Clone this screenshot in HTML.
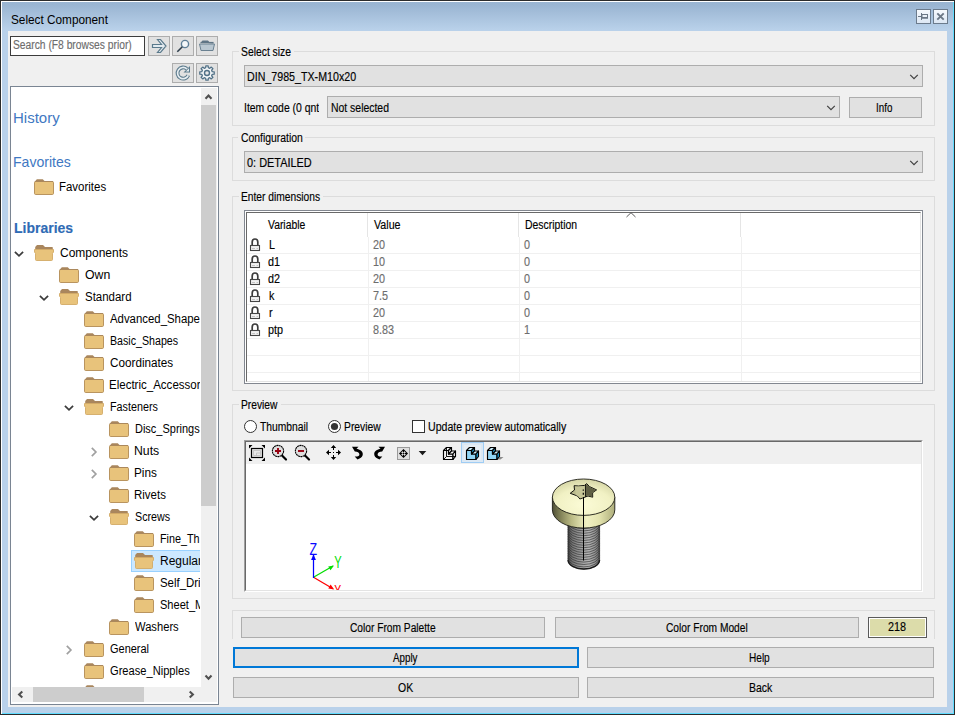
<!DOCTYPE html>
<html lang="en"><head><meta charset="utf-8"><title>Select Component</title>
<style>
*{box-sizing:border-box;margin:0;padding:0}
html,body{width:955px;height:715px;overflow:hidden;background:#b9d1ea}
body{position:relative;font-family:"Liberation Sans",sans-serif;font-size:12px;color:#000}
.a{position:absolute}
.x{position:absolute;line-height:20px;white-space:nowrap;transform-origin:0 0;-webkit-text-stroke:0.15px currentColor}
.grp{position:absolute;border:1px solid #dcdcdc}
.cb{position:absolute;background:#e1e1e1;border:1px solid #adadad}
.sb{position:absolute;background:#e1e1e1;border:1px solid #adadad}
svg{position:absolute;overflow:visible}
</style></head>
<body>
<div class="a" style="left:0px;top:0px;width:955px;height:31px;background:linear-gradient(#99b4d1 0,#9ab5d2 5px,#b9d1ea 30px)"></div>
<div class="a" style="left:0px;top:0px;width:955px;height:715px;border:1px solid #2b2b2b"></div>
<div class="a" style="left:1px;top:1px;width:953px;height:1px;background:#fff"></div>
<div class="a" style="left:1px;top:1px;width:1px;height:713px;background:#fff"></div>
<div class="a" style="left:953px;top:2px;width:1px;height:712px;background:#5fdcff"></div>
<div class="a" style="left:2px;top:713px;width:952px;height:1px;background:#5fdcff"></div>
<div class="a" style="left:8px;top:31px;width:939px;height:676px;background:#f0f0f0"></div>
<div class="x" id="title" style="left:11px;top:10px;-webkit-text-stroke:0;transform:scaleX(0.982);">Select Component</div>
<div class="a" style="left:916px;top:9px;width:15px;height:15px;border:1px solid #6c7b8c;background:linear-gradient(#f6f9fd,#dce7f4)"></div>
<div class="a" style="left:933px;top:9px;width:15px;height:15px;border:1px solid #6c7b8c;background:linear-gradient(#f6f9fd,#dce7f4)"></div>
<svg style="left:916px;top:9px" width="15" height="15" viewBox="0 0 15 15"><path d="M2 7.500h3.500M5.500 4v7" fill="none" stroke="#6b7785" stroke-width="1"/><rect x="6" y="5.500" width="5.500" height="3.500" fill="none" stroke="#6b7785"/><rect x="5.500" y="8" width="6.500" height="1.500" fill="#6b7785"/></svg>
<svg style="left:933px;top:9px" width="15" height="15" viewBox="0 0 15 15"><path d="M4.300 4.300l6.400 6.400M10.700 4.300l-6.400 6.400" fill="none" stroke="#6b7785" stroke-width="1.900"/></svg>
<div class="a" style="left:10px;top:36px;width:135px;height:20px;background:#fff;border:1px solid #3c3c3c"></div>
<div class="x" id="search" style="left:13px;top:35px;color:#6d6d6d;transform:scaleX(0.856);">Search (F8 browses prior)</div>
<div class="sb" style="left:148px;top:36px;width:22px;height:20px"></div>
<div class="sb" style="left:172px;top:36px;width:22px;height:20px"></div>
<div class="sb" style="left:196px;top:36px;width:22px;height:20px"></div>
<div class="sb" style="left:172px;top:63px;width:22px;height:20px"></div>
<div class="sb" style="left:196px;top:63px;width:22px;height:20px"></div>
<svg style="left:148px;top:36px" width="22" height="20" viewBox="0 0 22 20"><path d="M9.500 3.500h3l5.500 6.500-5.500 6.500h-3l4-5h-9v-3h9z" fill="#e3ebf0" stroke="#5b7a8c" stroke-width="1.200" stroke-linejoin="miter"/></svg>
<svg style="left:172px;top:36px" width="22" height="20" viewBox="0 0 22 20"><circle cx="13" cy="8" r="3.600" fill="#f4f7f9" stroke="#5f7f97" stroke-width="1.400"/><path d="M10.300 10.700L5.300 15.700" stroke="#2f3f4c" stroke-width="1.600" fill="none"/></svg>
<svg style="left:196px;top:36px" width="22" height="20" viewBox="0 0 22 20"><path d="M4.800 6.500l1.700-2h5.500l1.300 1.500h3.700l0.500 1.500z" fill="#5f7585"/><path d="M4.500 6.500h13" stroke="#5f7585" stroke-width="1.200"/><path d="M3.500 8h15l-1.500 6.500h-12z" fill="#b9c7d1" stroke="#6a8191" stroke-width="1" stroke-linejoin="round"/></svg>
<svg style="left:172px;top:63px" width="22" height="20" viewBox="0 0 22 20"><path d="M14.800 5.800A5.600 5.600 0 1 0 16.300 12.300" fill="none" stroke="#5b7a8c" stroke-width="3.800"/><path d="M11.500 9.500h6.500V3z" fill="#5b7a8c"/><path d="M14.800 5.800A5.600 5.600 0 1 0 16.300 12.300" fill="none" stroke="#e6edf1" stroke-width="1.700"/><path d="M13.800 8.500h3.200V5.300z" fill="#e6edf1"/></svg>
<svg style="left:196px;top:63px" width="22" height="20" viewBox="0 0 22 20"><path d="M9.86 2.79 L12.14 2.79 L12.34 4.77 L13.75 5.35 L15.29 4.09 L16.91 5.71 L15.65 7.25 L16.23 8.66 L18.21 8.86 L18.21 11.14 L16.23 11.34 L15.65 12.75 L16.91 14.29 L15.29 15.91 L13.75 14.65 L12.34 15.23 L12.14 17.21 L9.86 17.21 L9.66 15.23 L8.25 14.65 L6.71 15.91 L5.09 14.29 L6.35 12.75 L5.77 11.34 L3.79 11.14 L3.79 8.86 L5.77 8.66 L6.35 7.25 L5.09 5.71 L6.71 4.09 L8.25 5.35 L9.66 4.77Z" fill="#f3f6f8" stroke="#517187" stroke-width="1.300" stroke-linejoin="round"/><circle cx="11" cy="10" r="2.500" fill="#e8e8e8" stroke="#517187" stroke-width="1.400"/></svg>
<div class="a" style="left:10px;top:86px;width:209px;height:619px;background:#fff;border:1px solid #7a8593"></div>
<div class="a" style="left:12px;top:88px;width:188px;height:599px;overflow:hidden">
<div class="x" id="h1" style="left:1px;top:20px;font-size:15px;color:#3f78c2;-webkit-text-stroke:0;">History</div>
<div class="x" id="h2" style="left:1px;top:64px;font-size:15px;color:#3f78c2;-webkit-text-stroke:0;transform:scaleX(0.938);">Favorites</div>
<div class="x" id="h3" style="left:2px;top:130px;font-size:15px;color:#2f6bb5;font-weight:bold;transform:scaleX(0.933);">Libraries</div>
<svg style="left:22px;top:91px" width="20" height="16" viewBox="0 0 20 16"><path d="M0.500 3L2.800 0.200h6L11 2.500z" fill="#a9865d"/><rect x="0.500" y="2.500" width="19" height="13" rx="1.200" fill="#e8c37b" stroke="#b9945f" stroke-width="1"/><path d="M1 2.500h18" stroke="#ab885c" stroke-width="1"/></svg>
<div class="x" id="ti0" style="left:47px;top:89px;-webkit-text-stroke:0;transform:scaleX(0.955);">Favorites</div>
<svg style="left:2px;top:163px" width="10" height="6" viewBox="0 0 10 6"><path d="M0.900 0.800L5 4.900l4.100-4.100" fill="none" stroke="#3c3c3c" stroke-width="1.700"/></svg>
<svg style="left:22px;top:157px" width="20" height="16" viewBox="0 0 20 16"><path d="M1.200 5V2L3 0h6l2 2h7.300l0.500 0.600V5z" fill="#a9865d"/><path d="M0.500 4.500h19v2.500l-1 1.500v6q0 1-1 1h-15q-1 0-1-1v-6l-1-1.500z" fill="#e8c37b" stroke="#d3aa66" stroke-width="0.900"/></svg>
<div class="x" id="ti1" style="left:48px;top:155px;-webkit-text-stroke:0;">Components</div>
<svg style="left:47px;top:179px" width="20" height="16" viewBox="0 0 20 16"><path d="M0.500 3L2.800 0.200h6L11 2.500z" fill="#a9865d"/><rect x="0.500" y="2.500" width="19" height="13" rx="1.200" fill="#e8c37b" stroke="#b9945f" stroke-width="1"/><path d="M1 2.500h18" stroke="#ab885c" stroke-width="1"/></svg>
<div class="x" id="ti2" style="left:73px;top:177px;-webkit-text-stroke:0;transform:scaleX(1.022);">Own</div>
<svg style="left:27px;top:207px" width="10" height="6" viewBox="0 0 10 6"><path d="M0.900 0.800L5 4.900l4.100-4.100" fill="none" stroke="#3c3c3c" stroke-width="1.700"/></svg>
<svg style="left:47px;top:201px" width="20" height="16" viewBox="0 0 20 16"><path d="M1.200 5V2L3 0h6l2 2h7.300l0.500 0.600V5z" fill="#a9865d"/><path d="M0.500 4.500h19v2.500l-1 1.500v6q0 1-1 1h-15q-1 0-1-1v-6l-1-1.500z" fill="#e8c37b" stroke="#d3aa66" stroke-width="0.900"/></svg>
<div class="x" id="ti3" style="left:73px;top:199px;-webkit-text-stroke:0;transform:scaleX(0.955);">Standard</div>
<svg style="left:72px;top:223px" width="20" height="16" viewBox="0 0 20 16"><path d="M0.500 3L2.800 0.200h6L11 2.500z" fill="#a9865d"/><rect x="0.500" y="2.500" width="19" height="13" rx="1.200" fill="#e8c37b" stroke="#b9945f" stroke-width="1"/><path d="M1 2.500h18" stroke="#ab885c" stroke-width="1"/></svg>
<div class="x" id="ti4" style="left:98px;top:221px;-webkit-text-stroke:0;transform:scaleX(0.949);">Advanced_Shape</div>
<svg style="left:72px;top:245px" width="20" height="16" viewBox="0 0 20 16"><path d="M0.500 3L2.800 0.200h6L11 2.500z" fill="#a9865d"/><rect x="0.500" y="2.500" width="19" height="13" rx="1.200" fill="#e8c37b" stroke="#b9945f" stroke-width="1"/><path d="M1 2.500h18" stroke="#ab885c" stroke-width="1"/></svg>
<div class="x" id="ti5" style="left:98px;top:243px;-webkit-text-stroke:0;transform:scaleX(0.888);">Basic_Shapes</div>
<svg style="left:72px;top:267px" width="20" height="16" viewBox="0 0 20 16"><path d="M0.500 3L2.800 0.200h6L11 2.500z" fill="#a9865d"/><rect x="0.500" y="2.500" width="19" height="13" rx="1.200" fill="#e8c37b" stroke="#b9945f" stroke-width="1"/><path d="M1 2.500h18" stroke="#ab885c" stroke-width="1"/></svg>
<div class="x" id="ti6" style="left:98px;top:265px;-webkit-text-stroke:0;transform:scaleX(0.977);">Coordinates</div>
<svg style="left:72px;top:289px" width="20" height="16" viewBox="0 0 20 16"><path d="M0.500 3L2.800 0.200h6L11 2.500z" fill="#a9865d"/><rect x="0.500" y="2.500" width="19" height="13" rx="1.200" fill="#e8c37b" stroke="#b9945f" stroke-width="1"/><path d="M1 2.500h18" stroke="#ab885c" stroke-width="1"/></svg>
<div class="x" id="ti7" style="left:97px;top:287px;-webkit-text-stroke:0;transform:scaleX(0.96);">Electric_Accessor</div>
<svg style="left:52px;top:317px" width="10" height="6" viewBox="0 0 10 6"><path d="M0.900 0.800L5 4.900l4.100-4.100" fill="none" stroke="#3c3c3c" stroke-width="1.700"/></svg>
<svg style="left:72px;top:311px" width="20" height="16" viewBox="0 0 20 16"><path d="M1.200 5V2L3 0h6l2 2h7.300l0.500 0.600V5z" fill="#a9865d"/><path d="M0.500 4.500h19v2.500l-1 1.500v6q0 1-1 1h-15q-1 0-1-1v-6l-1-1.500z" fill="#e8c37b" stroke="#d3aa66" stroke-width="0.900"/></svg>
<div class="x" id="ti8" style="left:98px;top:309px;-webkit-text-stroke:0;transform:scaleX(0.897);">Fasteners</div>
<svg style="left:97px;top:333px" width="20" height="16" viewBox="0 0 20 16"><path d="M0.500 3L2.800 0.200h6L11 2.500z" fill="#a9865d"/><rect x="0.500" y="2.500" width="19" height="13" rx="1.200" fill="#e8c37b" stroke="#b9945f" stroke-width="1"/><path d="M1 2.500h18" stroke="#ab885c" stroke-width="1"/></svg>
<div class="x" id="ti9" style="left:123px;top:331px;-webkit-text-stroke:0;transform:scaleX(0.915);">Disc_Springs</div>
<svg style="left:79px;top:359px" width="6" height="10" viewBox="0 0 6 10"><path d="M0.800 0.900L4.900 5l-4.100 4.100" fill="none" stroke="#a0a0a0" stroke-width="1.700"/></svg>
<svg style="left:97px;top:355px" width="20" height="16" viewBox="0 0 20 16"><path d="M0.500 3L2.800 0.200h6L11 2.500z" fill="#a9865d"/><rect x="0.500" y="2.500" width="19" height="13" rx="1.200" fill="#e8c37b" stroke="#b9945f" stroke-width="1"/><path d="M1 2.500h18" stroke="#ab885c" stroke-width="1"/></svg>
<div class="x" id="ti10" style="left:122px;top:353px;-webkit-text-stroke:0;transform:scaleX(1.021);">Nuts</div>
<svg style="left:79px;top:381px" width="6" height="10" viewBox="0 0 6 10"><path d="M0.800 0.900L4.900 5l-4.100 4.100" fill="none" stroke="#a0a0a0" stroke-width="1.700"/></svg>
<svg style="left:97px;top:377px" width="20" height="16" viewBox="0 0 20 16"><path d="M0.500 3L2.800 0.200h6L11 2.500z" fill="#a9865d"/><rect x="0.500" y="2.500" width="19" height="13" rx="1.200" fill="#e8c37b" stroke="#b9945f" stroke-width="1"/><path d="M1 2.500h18" stroke="#ab885c" stroke-width="1"/></svg>
<div class="x" id="ti11" style="left:122px;top:375px;-webkit-text-stroke:0;transform:scaleX(0.982);">Pins</div>
<svg style="left:97px;top:399px" width="20" height="16" viewBox="0 0 20 16"><path d="M0.500 3L2.800 0.200h6L11 2.500z" fill="#a9865d"/><rect x="0.500" y="2.500" width="19" height="13" rx="1.200" fill="#e8c37b" stroke="#b9945f" stroke-width="1"/><path d="M1 2.500h18" stroke="#ab885c" stroke-width="1"/></svg>
<div class="x" id="ti12" style="left:122px;top:397px;-webkit-text-stroke:0;transform:scaleX(0.956);">Rivets</div>
<svg style="left:77px;top:427px" width="10" height="6" viewBox="0 0 10 6"><path d="M0.900 0.800L5 4.900l4.100-4.100" fill="none" stroke="#3c3c3c" stroke-width="1.700"/></svg>
<svg style="left:97px;top:421px" width="20" height="16" viewBox="0 0 20 16"><path d="M1.200 5V2L3 0h6l2 2h7.300l0.500 0.600V5z" fill="#a9865d"/><path d="M0.500 4.500h19v2.500l-1 1.500v6q0 1-1 1h-15q-1 0-1-1v-6l-1-1.500z" fill="#e8c37b" stroke="#d3aa66" stroke-width="0.900"/></svg>
<div class="x" id="ti13" style="left:123px;top:419px;-webkit-text-stroke:0;transform:scaleX(0.893);">Screws</div>
<svg style="left:122px;top:443px" width="20" height="16" viewBox="0 0 20 16"><path d="M0.500 3L2.800 0.200h6L11 2.500z" fill="#a9865d"/><rect x="0.500" y="2.500" width="19" height="13" rx="1.200" fill="#e8c37b" stroke="#b9945f" stroke-width="1"/><path d="M1 2.500h18" stroke="#ab885c" stroke-width="1"/></svg>
<div class="x" id="ti14" style="left:148px;top:441px;-webkit-text-stroke:0;transform:scaleX(0.9);">Fine_Th</div>
<div class="a" style="left:119px;top:462px;width:200px;height:22px;background:#cce8ff;border:1px solid #99d1ff"></div>
<svg style="left:122px;top:465px" width="20" height="16" viewBox="0 0 20 16"><path d="M1.200 5V2L3 0h6l2 2h7.300l0.500 0.600V5z" fill="#a9865d"/><path d="M0.500 4.500h19v2.500l-1 1.500v6q0 1-1 1h-15q-1 0-1-1v-6l-1-1.500z" fill="#e8c37b" stroke="#d3aa66" stroke-width="0.900"/></svg>
<div class="x" id="ti15" style="left:148px;top:463px;-webkit-text-stroke:0;">Regular</div>
<svg style="left:122px;top:487px" width="20" height="16" viewBox="0 0 20 16"><path d="M0.500 3L2.800 0.200h6L11 2.500z" fill="#a9865d"/><rect x="0.500" y="2.500" width="19" height="13" rx="1.200" fill="#e8c37b" stroke="#b9945f" stroke-width="1"/><path d="M1 2.500h18" stroke="#ab885c" stroke-width="1"/></svg>
<div class="x" id="ti16" style="left:148px;top:485px;-webkit-text-stroke:0;transform:scaleX(0.952);">Self_Dri</div>
<svg style="left:122px;top:509px" width="20" height="16" viewBox="0 0 20 16"><path d="M0.500 3L2.800 0.200h6L11 2.500z" fill="#a9865d"/><rect x="0.500" y="2.500" width="19" height="13" rx="1.200" fill="#e8c37b" stroke="#b9945f" stroke-width="1"/><path d="M1 2.500h18" stroke="#ab885c" stroke-width="1"/></svg>
<div class="x" id="ti17" style="left:148px;top:507px;-webkit-text-stroke:0;transform:scaleX(0.921);">Sheet_M</div>
<svg style="left:97px;top:531px" width="20" height="16" viewBox="0 0 20 16"><path d="M0.500 3L2.800 0.200h6L11 2.500z" fill="#a9865d"/><rect x="0.500" y="2.500" width="19" height="13" rx="1.200" fill="#e8c37b" stroke="#b9945f" stroke-width="1"/><path d="M1 2.500h18" stroke="#ab885c" stroke-width="1"/></svg>
<div class="x" id="ti18" style="left:123px;top:529px;-webkit-text-stroke:0;transform:scaleX(0.932);">Washers</div>
<svg style="left:54px;top:557px" width="6" height="10" viewBox="0 0 6 10"><path d="M0.800 0.900L4.900 5l-4.100 4.100" fill="none" stroke="#a0a0a0" stroke-width="1.700"/></svg>
<svg style="left:72px;top:553px" width="20" height="16" viewBox="0 0 20 16"><path d="M0.500 3L2.800 0.200h6L11 2.500z" fill="#a9865d"/><rect x="0.500" y="2.500" width="19" height="13" rx="1.200" fill="#e8c37b" stroke="#b9945f" stroke-width="1"/><path d="M1 2.500h18" stroke="#ab885c" stroke-width="1"/></svg>
<div class="x" id="ti19" style="left:98px;top:551px;-webkit-text-stroke:0;transform:scaleX(0.914);">General</div>
<svg style="left:72px;top:575px" width="20" height="16" viewBox="0 0 20 16"><path d="M0.500 3L2.800 0.200h6L11 2.500z" fill="#a9865d"/><rect x="0.500" y="2.500" width="19" height="13" rx="1.200" fill="#e8c37b" stroke="#b9945f" stroke-width="1"/><path d="M1 2.500h18" stroke="#ab885c" stroke-width="1"/></svg>
<div class="x" id="ti20" style="left:98px;top:573px;-webkit-text-stroke:0;transform:scaleX(0.927);">Grease_Nipples</div>
<svg style="left:72px;top:597px" width="20" height="16" viewBox="0 0 20 16"><path d="M0.500 3L2.800 0.200h6L11 2.500z" fill="#a9865d"/><rect x="0.500" y="2.500" width="19" height="13" rx="1.200" fill="#e8c37b" stroke="#b9945f" stroke-width="1"/><path d="M1 2.500h18" stroke="#ab885c" stroke-width="1"/></svg>
</div>
<div class="a" style="left:201px;top:88px;width:16px;height:599px;background:#f0f0f0"></div>
<div class="a" style="left:201px;top:105px;width:15px;height:401px;background:#cdcdcd"></div>
<svg style="left:204px;top:93px" width="9" height="7" viewBox="0 0 9 7"><path d="M1.500 5.700L4.500 2.500 7.500 5.700" fill="none" stroke="#505050" stroke-width="2.100"/></svg>
<svg style="left:204px;top:674px" width="9" height="7" viewBox="0 0 9 7"><path d="M1.500 1.500L4.500 4.700 7.500 1.500" fill="none" stroke="#505050" stroke-width="2.100"/></svg>
<div class="a" style="left:12px;top:687px;width:205px;height:15px;background:#f0f0f0"></div>
<div class="a" style="left:33px;top:687px;width:111px;height:15px;background:#cdcdcd"></div>
<svg style="left:17px;top:690px" width="7" height="9" viewBox="0 0 7 9"><path d="M5.300 1.500L2.100 4.500 5.300 7.500" fill="none" stroke="#505050" stroke-width="2.100"/></svg>
<svg style="left:188px;top:690px" width="7" height="9" viewBox="0 0 7 9"><path d="M1.700 1.500L4.900 4.500 1.700 7.500" fill="none" stroke="#505050" stroke-width="2.100"/></svg>
<div class="grp" style="left:232px;top:51px;width:703px;height:75px"></div>
<div class="a" style="left:239px;top:51px;width:55px;height:1px;background:#f0f0f0"></div>
<div class="x" id="g1" style="left:241px;top:42px;transform:scaleX(0.862);">Select size</div>
<div class="cb" style="left:244px;top:65px;width:679px;height:22px"></div>
<div class="x" id="c1" style="left:247px;top:67px;transform:scaleX(0.889);">DIN_7985_TX-M10x20</div>
<svg style="left:909px;top:74px" width="10" height="6" viewBox="0 0 10 6"><path d="M1.200 0.800L5 4.600l3.800-3.800" fill="none" stroke="#404040" stroke-width="1.200"/></svg>
<div class="a" style="left:240px;top:96px;width:79px;height:22px;overflow:hidden">
<div class="x" id="itemcode" style="left:4px;top:2px;transform:scaleX(0.867);">Item code (0 qnt</div>
</div>
<div class="cb" style="left:327px;top:96px;width:513px;height:22px"></div>
<div class="x" id="c2" style="left:331px;top:98px;transform:scaleX(0.869);">Not selected</div>
<svg style="left:826px;top:105px" width="10" height="6" viewBox="0 0 10 6"><path d="M1.200 0.800L5 4.600l3.800-3.800" fill="none" stroke="#404040" stroke-width="1.200"/></svg>
<div class="cb" style="left:849px;top:97px;width:73px;height:21px;"></div>
<div class="x" id="binfo" style="left:876px;top:98px;transform:scaleX(0.816);">Info</div>
<div class="grp" style="left:232px;top:137px;width:703px;height:44px"></div>
<div class="a" style="left:238px;top:137px;width:67px;height:1px;background:#f0f0f0"></div>
<div class="x" id="g2" style="left:241px;top:128px;transform:scaleX(0.866);">Configuration</div>
<div class="cb" style="left:244px;top:151px;width:679px;height:22px"></div>
<div class="x" id="c3" style="left:247px;top:153px;transform:scaleX(0.91);">0: DETAILED</div>
<svg style="left:909px;top:160px" width="10" height="6" viewBox="0 0 10 6"><path d="M1.200 0.800L5 4.600l3.800-3.800" fill="none" stroke="#404040" stroke-width="1.200"/></svg>
<div class="grp" style="left:232px;top:196px;width:703px;height:195px"></div>
<div class="a" style="left:239px;top:196px;width:84px;height:1px;background:#f0f0f0"></div>
<div class="x" id="g3" style="left:241px;top:187px;transform:scaleX(0.853);">Enter dimensions</div>
<div class="a" style="left:244px;top:210px;width:679px;height:174px;background:#fff;border:1px solid #828790"></div>
<div class="a" style="left:246px;top:212px;width:675px;height:170px;border:1px solid #696969;border-right-color:#e3e3e3;border-bottom-color:#e3e3e3"></div>
<div class="a" style="left:247px;top:253px;width:673px;height:1px;background:#f0f0f0"></div>
<div class="a" style="left:247px;top:270px;width:673px;height:1px;background:#f0f0f0"></div>
<div class="a" style="left:247px;top:287px;width:673px;height:1px;background:#f0f0f0"></div>
<div class="a" style="left:247px;top:304px;width:673px;height:1px;background:#f0f0f0"></div>
<div class="a" style="left:247px;top:321px;width:673px;height:1px;background:#f0f0f0"></div>
<div class="a" style="left:247px;top:338px;width:673px;height:1px;background:#f0f0f0"></div>
<div class="a" style="left:247px;top:355px;width:673px;height:1px;background:#f0f0f0"></div>
<div class="a" style="left:247px;top:372px;width:673px;height:1px;background:#f0f0f0"></div>
<div class="a" style="left:367px;top:213px;width:1px;height:24px;background:#e5e5e5"></div>
<div class="a" style="left:368px;top:237px;width:1px;height:144px;background:#f0f0f0"></div>
<div class="a" style="left:518px;top:213px;width:1px;height:24px;background:#e5e5e5"></div>
<div class="a" style="left:519px;top:237px;width:1px;height:144px;background:#f0f0f0"></div>
<div class="a" style="left:740px;top:213px;width:1px;height:24px;background:#e5e5e5"></div>
<div class="a" style="left:741px;top:237px;width:1px;height:144px;background:#f0f0f0"></div>
<div class="x" id="th1" style="left:268px;top:215px;transform:scaleX(0.863);">Variable</div>
<div class="x" id="th2" style="left:374px;top:215px;transform:scaleX(0.89);">Value</div>
<div class="x" id="th3" style="left:525px;top:215px;transform:scaleX(0.867);">Description</div>
<svg style="left:626px;top:212px" width="10" height="6" viewBox="0 0 10 6"><path d="M0.500 5L5 0.700 9.500 5" fill="none" stroke="#5a5a5a" stroke-width="1"/></svg>
<svg style="left:250px;top:238px" width="11" height="13" viewBox="0 0 11 13"><path d="M2.200 7.500V4a2.800 3 0 0 1 5.600 0V7.500" fill="none" stroke="#3c3c3c" stroke-width="1.700"/><rect x="0.500" y="7.500" width="9" height="5" fill="#f2f2f2" stroke="#454545" stroke-width="1.100"/><path d="M2 10.500h3M6.500 10.500h1.500" stroke="#c4c4c4" stroke-width="1"/></svg>
<div class="x" id="r0a" style="left:269px;top:235px;transform:scaleX(0.9);">L</div>
<div class="x" id="r0b" style="left:373px;top:235px;color:#6d6d6d;transform:scaleX(0.9);">20</div>
<div class="x" id="r0c" style="left:524px;top:235px;color:#6d6d6d;transform:scaleX(0.9);">0</div>
<svg style="left:250px;top:255px" width="11" height="13" viewBox="0 0 11 13"><path d="M2.200 7.500V4a2.800 3 0 0 1 5.600 0V7.500" fill="none" stroke="#3c3c3c" stroke-width="1.700"/><rect x="0.500" y="7.500" width="9" height="5" fill="#f2f2f2" stroke="#454545" stroke-width="1.100"/><path d="M2 10.500h3M6.500 10.500h1.500" stroke="#c4c4c4" stroke-width="1"/></svg>
<div class="x" id="r1a" style="left:268px;top:252px;transform:scaleX(0.9);">d1</div>
<div class="x" id="r1b" style="left:373px;top:252px;color:#6d6d6d;transform:scaleX(0.9);">10</div>
<div class="x" id="r1c" style="left:524px;top:252px;color:#6d6d6d;transform:scaleX(0.9);">0</div>
<svg style="left:250px;top:272px" width="11" height="13" viewBox="0 0 11 13"><path d="M2.200 7.500V4a2.800 3 0 0 1 5.600 0V7.500" fill="none" stroke="#3c3c3c" stroke-width="1.700"/><rect x="0.500" y="7.500" width="9" height="5" fill="#f2f2f2" stroke="#454545" stroke-width="1.100"/><path d="M2 10.500h3M6.500 10.500h1.500" stroke="#c4c4c4" stroke-width="1"/></svg>
<div class="x" id="r2a" style="left:268px;top:269px;transform:scaleX(0.9);">d2</div>
<div class="x" id="r2b" style="left:373px;top:269px;color:#6d6d6d;transform:scaleX(0.9);">20</div>
<div class="x" id="r2c" style="left:524px;top:269px;color:#6d6d6d;transform:scaleX(0.9);">0</div>
<svg style="left:250px;top:289px" width="11" height="13" viewBox="0 0 11 13"><path d="M2.200 7.500V4a2.800 3 0 0 1 5.600 0V7.500" fill="none" stroke="#3c3c3c" stroke-width="1.700"/><rect x="0.500" y="7.500" width="9" height="5" fill="#f2f2f2" stroke="#454545" stroke-width="1.100"/><path d="M2 10.500h3M6.500 10.500h1.500" stroke="#c4c4c4" stroke-width="1"/></svg>
<div class="x" id="r3a" style="left:269px;top:286px;transform:scaleX(0.9);">k</div>
<div class="x" id="r3b" style="left:373px;top:286px;color:#6d6d6d;transform:scaleX(0.9);">7.5</div>
<div class="x" id="r3c" style="left:524px;top:286px;color:#6d6d6d;transform:scaleX(0.9);">0</div>
<svg style="left:250px;top:306px" width="11" height="13" viewBox="0 0 11 13"><path d="M2.200 7.500V4a2.800 3 0 0 1 5.600 0V7.500" fill="none" stroke="#3c3c3c" stroke-width="1.700"/><rect x="0.500" y="7.500" width="9" height="5" fill="#f2f2f2" stroke="#454545" stroke-width="1.100"/><path d="M2 10.500h3M6.500 10.500h1.500" stroke="#c4c4c4" stroke-width="1"/></svg>
<div class="x" id="r4a" style="left:269px;top:303px;transform:scaleX(0.9);">r</div>
<div class="x" id="r4b" style="left:373px;top:303px;color:#6d6d6d;transform:scaleX(0.9);">20</div>
<div class="x" id="r4c" style="left:524px;top:303px;color:#6d6d6d;transform:scaleX(0.9);">0</div>
<svg style="left:250px;top:323px" width="11" height="13" viewBox="0 0 11 13"><path d="M2.200 7.500V4a2.800 3 0 0 1 5.600 0V7.500" fill="none" stroke="#3c3c3c" stroke-width="1.700"/><rect x="0.500" y="7.500" width="9" height="5" fill="#f2f2f2" stroke="#454545" stroke-width="1.100"/><path d="M2 10.500h3M6.500 10.500h1.500" stroke="#c4c4c4" stroke-width="1"/></svg>
<div class="x" id="r5a" style="left:268px;top:320px;transform:scaleX(0.9);">ptp</div>
<div class="x" id="r5b" style="left:373px;top:320px;color:#6d6d6d;transform:scaleX(0.9);">8.83</div>
<div class="x" id="r5c" style="left:524px;top:320px;color:#6d6d6d;transform:scaleX(0.9);">1</div>
<div class="grp" style="left:232px;top:404px;width:703px;height:195px"></div>
<div class="a" style="left:239px;top:404px;width:42px;height:1px;background:#f0f0f0"></div>
<div class="x" id="g4" style="left:241px;top:395px;transform:scaleX(0.853);">Preview</div>
<svg style="left:244px;top:420px" width="13" height="13" viewBox="0 0 13 13"><circle cx="6.500" cy="6.500" r="6" fill="#fff" stroke="#333" stroke-width="1"/></svg>
<div class="x" id="rt1" style="left:260px;top:417px;transform:scaleX(0.859);">Thumbnail</div>
<svg style="left:328px;top:420px" width="13" height="13" viewBox="0 0 13 13"><circle cx="6.500" cy="6.500" r="6" fill="#fff" stroke="#333" stroke-width="1"/><circle cx="6.500" cy="6.500" r="3.600" fill="#333"/></svg>
<div class="x" id="rt2" style="left:344px;top:417px;transform:scaleX(0.86);">Preview</div>
<div class="a" style="left:412px;top:420px;width:13px;height:13px;background:#fff;border:1px solid #333"></div>
<div class="x" id="rt3" style="left:428px;top:417px;transform:scaleX(0.882);">Update preview automatically</div>
<div class="a" style="left:244px;top:440px;width:679px;height:152px;background:#fff;border:1px solid #a0a0a0;border-right-color:#fff;border-bottom-color:#fff"></div>
<div class="a" style="left:245px;top:441px;width:677px;height:150px;border:1px solid #696969;border-right-color:#e3e3e3;border-bottom-color:#e3e3e3"></div>
<div class="a" style="left:246px;top:442px;width:675px;height:22px;background:#f0f0f0"></div>
<div class="a" id="pv" style="left:246px;top:442px;width:675px;height:148px;overflow:hidden">
<svg style="left:0;top:0" width="675" height="148" viewBox="246 442 675 148">
<defs>
<linearGradient id="gs" x1="0" x2="1" y1="0" y2="0"><stop offset="0" stop-color="#4e4e36"/><stop offset="0.100" stop-color="#77774f"/><stop offset="0.300" stop-color="#b9b983"/><stop offset="0.550" stop-color="#f1f1c3"/><stop offset="0.750" stop-color="#e3e3ae"/><stop offset="1" stop-color="#aeae7c"/></linearGradient>
<radialGradient id="gt" cx="0.500" cy="0.700" r="0.800"><stop offset="0" stop-color="#fbfbd6"/><stop offset="0.550" stop-color="#f1f1c4"/><stop offset="1" stop-color="#c9c998"/></radialGradient>
<linearGradient id="gh" x1="0" x2="1" y1="0" y2="0"><stop offset="0" stop-color="#4a4a4a"/><stop offset="0.150" stop-color="#777"/><stop offset="0.450" stop-color="#a2a2a2"/><stop offset="0.650" stop-color="#b4b4b4"/><stop offset="0.850" stop-color="#949494"/><stop offset="1" stop-color="#626262"/></linearGradient>
</defs>
<g transform="translate(249 445)"><path d="M0 0h3.500L0 3.500zM16 0h-3.500L16 3.500zM0 16h3.500L0 12.500zM16 16h-3.500L16 12.500z" fill="#000"/><rect x="2.500" y="3.500" width="11" height="9" fill="#e8e8e8" stroke="#000" stroke-width="1.200"/><path d="M4.500 5.500h7v5h-7zM7.500 10.500v-2.500h4" fill="none" stroke="#bdbdbd" stroke-width="0.800"/></g>
<g transform="translate(278 451)"><path d="M4 4.500L8 8.500" stroke="#000" stroke-width="2.200" stroke-linecap="round" fill="none"/><circle cx="0" cy="0" r="5.600" fill="#dedede" stroke="#000" stroke-width="1.100" stroke-dasharray="2 0.400"/><path d="M-3 0h6M0 -3v6" stroke="#960010" stroke-width="1.900" fill="none"/></g>
<g transform="translate(301 451)"><path d="M4 4.500L8 8.500" stroke="#000" stroke-width="2.200" stroke-linecap="round" fill="none"/><circle cx="0" cy="0" r="5.600" fill="#dedede" stroke="#000" stroke-width="1.100" stroke-dasharray="2 0.400"/><path d="M-3 0h6" stroke="#960010" stroke-width="1.900" fill="none"/></g>
<g transform="translate(333.500 452.500)" fill="#000"><path d="M0 -7.500l2.700 3h-5.400zM0 7.500l2.700-3h-5.400zM-7.500 0l3-2.700v5.400zM7.500 0l-3-2.700v5.400z"/><path d="M0 -5v2.500M0 5v-2.500M-5 0h2.500M5 0h-2.500" stroke="#000" stroke-width="1" fill="none"/><rect x="-0.500" y="-0.500" width="1" height="1"/></g>
<path d="M352 446.800h6.500l-2 2c3.300 0.500 6.300 2.500 6.300 5.300 0 2-1.300 3.500-3.300 4.500l-2 0.900-2.800-3h2.300c1.600-0.300 2.400-1 2.400-2.100 0-1.500-2-2.800-4.600-2.800z" fill="#000"/>
<path d="M385 446.800h-6.500l2 2c-3.300 0.500-6.300 2.500-6.300 5.300 0 2 1.300 3.500 3.300 4.500l2 0.900 2.800-3h-2.300c-1.600-0.300-2.400-1-2.400-2.100 0-1.500 2-2.800 4.600-2.800z" fill="#000"/>
<rect x="397.500" y="447.500" width="12" height="12" fill="#dfdfdf" stroke="#9a9a9a"/>
<g transform="translate(403.500 453.500)"><path d="M0 -4.500L4.500 0 0 4.500 -4.500 0z" fill="#000"/><path d="M-1.500 -1.500h3v3h-3z" fill="#dfdfdf"/><path d="M0 -3v6M-3 0h6" stroke="#000" stroke-width="1" /><path d="M-1 -2.500v5M1 -2.500v5M-2.500 -1h5M-2.500 1h5" stroke="#dfdfdf" stroke-width="0.600"/></g>
<path d="M418.700 451h7.600l-3.800 4.200z" fill="#1a1a1a"/>
<g transform="translate(443 447)" stroke="#000" stroke-width="1.150" stroke-linejoin="round"><path d="M0.500 3.500h5v3.500h4.500v5.500h-9.500z" fill="#f4f4f4"/><path d="M0.500 3.500l3-3h5l-3 3z" fill="#f4f4f4"/><path d="M5.500 3.500l3-3v3.500l-3 3z" fill="#f4f4f4"/><path d="M5.500 7l3-3h4l-2.500 3z" fill="#f4f4f4"/><path d="M10 7l2.500-3v5.500l-2.500 3z" fill="#f4f4f4"/><path d="M3.500 0.500v9l-3 3M3.500 9.500h9" fill="none" stroke-width="0.900"/></g>
<rect x="461.500" y="442.500" width="22" height="20" fill="#dbe8f4" stroke="#9fcdf5"/>
<rect x="464" y="445" width="17" height="15" fill="#e6eef5"/>
<g transform="translate(466 447)" stroke="#000" stroke-width="1.150" stroke-linejoin="round"><path d="M0.500 3.500h5v3.500h4.500v5.500h-9.500z" fill="#90d4f5"/><path d="M0.500 3.500l3-3h5l-3 3z" fill="#c9edfc"/><path d="M5.500 3.500l3-3v3.500l-3 3z" fill="#1b96cc"/><path d="M5.500 7l3-3h4l-2.500 3z" fill="#c9edfc"/><path d="M10 7l2.500-3v5.500l-2.500 3z" fill="#1b96cc"/></g>
<path d="M497 459.500l3-2.500h3.500l-3 2.500z" fill="#8c8c8c"/>
<g transform="translate(487 447)" stroke="#000" stroke-width="1.150" stroke-linejoin="round"><path d="M0.500 3.500h5v3.500h4.500v5.500h-9.500z" fill="#90d4f5"/><path d="M0.500 3.500l3-3h5l-3 3z" fill="#c9edfc"/><path d="M5.500 3.500l3-3v3.500l-3 3z" fill="#1b96cc"/><path d="M5.500 7l3-3h4l-2.500 3z" fill="#c9edfc"/><path d="M10 7l2.500-3v5.500l-2.500 3z" fill="#1b96cc"/></g>
<g fill="none" stroke-width="1.250"><path d="M313.500 577.300L333 588.800" stroke="#f00"/><path d="M313.500 577.300L333 566" stroke="#0d0"/><path d="M313.500 578V555" stroke="#00f"/></g>
<path d="M313.500 554.300l2.400 5.700h-4.800z" fill="#00f"/>
<path d="M334 565.400l-5.800 1.200 2.300 3.700z" fill="#0d0"/>
<path d="M334.200 589.600l-5.900-1.200 2.300-3.800z" fill="#f00"/>
<text x="309.600" y="554.500" font-family="Liberation Sans, sans-serif" font-size="16" fill="#0a0aff" textLength="7.600" lengthAdjust="spacingAndGlyphs">Z</text>
<text x="334.200" y="568.300" font-family="Liberation Sans, sans-serif" font-size="16" fill="#0d0" textLength="7.400" lengthAdjust="spacingAndGlyphs">Y</text>
<text x="334" y="596.800" font-family="Liberation Sans, sans-serif" font-size="16" fill="#f00" textLength="7.400" lengthAdjust="spacingAndGlyphs">X</text>
<path d="M568.0 518V560A15.800000000000011 9.0 0 0 0 599.6 560V518z" fill="url(#gh)"/>
<g clip-path="none"><path d="M568.0 519.5A15.800000000000011 9.0 0 0 0 599.6 519.5M568.0 521.9A15.800000000000011 9.0 0 0 0 599.6 521.9M568.0 524.3A15.800000000000011 9.0 0 0 0 599.6 524.3M568.0 526.7A15.800000000000011 9.0 0 0 0 599.6 526.7M568.0 529.1A15.800000000000011 9.0 0 0 0 599.6 529.1M568.0 531.5A15.800000000000011 9.0 0 0 0 599.6 531.5M568.0 533.9A15.800000000000011 9.0 0 0 0 599.6 533.9M568.0 536.3A15.800000000000011 9.0 0 0 0 599.6 536.3M568.0 538.7A15.800000000000011 9.0 0 0 0 599.6 538.7M568.0 541.1A15.800000000000011 9.0 0 0 0 599.6 541.1M568.0 543.5A15.800000000000011 9.0 0 0 0 599.6 543.5M568.0 545.9A15.800000000000011 9.0 0 0 0 599.6 545.9M568.0 548.3A15.800000000000011 9.0 0 0 0 599.6 548.3M568.0 550.7A15.800000000000011 9.0 0 0 0 599.6 550.7M568.0 553.1A15.800000000000011 9.0 0 0 0 599.6 553.1M568.0 555.5A15.800000000000011 9.0 0 0 0 599.6 555.5M568.0 557.9A15.800000000000011 9.0 0 0 0 599.6 557.9M568.0 560.3A15.800000000000011 9.0 0 0 0 599.6 560.3" fill="none" stroke="#2a2a2a" stroke-opacity="0.600" stroke-width="1"/></g>
<path d="M568.0 560A15.800000000000011 9.0 0 0 0 599.6 560" fill="none" stroke="#1a1a1a" stroke-width="1.300"/>
<path d="M568.0 518V560M599.6 518V560" fill="none" stroke="#333" stroke-width="0.800"/>
<path d="M552.4 497.2v12.7a31.2 18.2 0 0 0 62.4 0v-12.7z" fill="url(#gs)" stroke="#1c1c14" stroke-width="0.900"/>
<ellipse cx="583.6" cy="497.2" rx="31.2" ry="18.2" fill="url(#gt)" stroke="#1c1c14" stroke-width="0.900"/>
<path d="M570.200 493.300L574.500 490 574.100 485.700 578.500 486 584.500 485.400 586.700 483.600 589.500 486.600 596.600 489.900 592.600 492.700 592.700 497.200 588 496 579.900 499 577.500 496z" fill="#b9b98c" stroke="#15150f" stroke-width="1" stroke-linejoin="round"/>
<path d="M586.200 484.300L589.500 486.800 596 489.900 592.300 492.700 592.300 496.700 588 495.600 586.200 496.200z" fill="#5f5f44"/>
<path d="M575 486.400L578.500 486.600 584.500 486v10.500l-4.500 1.800-2-2.200-2.200-1.200z" fill="#c6c697"/>
<path d="M585.600 484.200V497" stroke="#15150f" stroke-width="1.100" fill="none"/>
<path d="M583.300 489.500v1.200M583.300 492.800v2" stroke="#000" stroke-width="1.200" fill="none"/>
<path d="M583.500 497V560.500" stroke="#000" stroke-width="1" fill="none"/>
</svg>
</div>
<div class="a" style="left:232px;top:610px;width:703px;height:29px;border:1px solid #dcdcdc;border-bottom:none"></div>
<div class="cb" style="left:241px;top:617px;width:304px;height:21px;"></div>
<div class="x" id="bpal" style="left:350px;top:618px;transform:scaleX(0.85);">Color From Palette</div>
<div class="cb" style="left:555px;top:617px;width:304px;height:21px;"></div>
<div class="x" id="bmod" style="left:666px;top:618px;transform:scaleX(0.851);">Color From Model</div>
<div class="a" style="left:868px;top:617px;width:59px;height:21px;background:#fff;border:1px solid #5a5a5a"></div>
<div class="a" style="left:870px;top:619px;width:55px;height:17px;background:#dcdcaa"></div>
<div class="x" id="b218" style="left:888px;top:617px;transform:scaleX(0.9);">218</div>
<div class="cb" style="left:233px;top:647px;width:346px;height:21px;border:2px solid #0078d7;"></div>
<div class="x" id="bapply" style="left:393px;top:648px;transform:scaleX(0.814);">Apply</div>
<div class="cb" style="left:587px;top:647px;width:347px;height:21px;"></div>
<div class="x" id="bhelp" style="left:749px;top:648px;transform:scaleX(0.84);">Help</div>
<div class="cb" style="left:233px;top:677px;width:346px;height:21px;"></div>
<div class="x" id="bok" style="left:398px;top:678px;transform:scaleX(0.872);">OK</div>
<div class="cb" style="left:587px;top:677px;width:347px;height:21px;"></div>
<div class="x" id="bback" style="left:749px;top:678px;transform:scaleX(0.871);">Back</div>
</body></html>
